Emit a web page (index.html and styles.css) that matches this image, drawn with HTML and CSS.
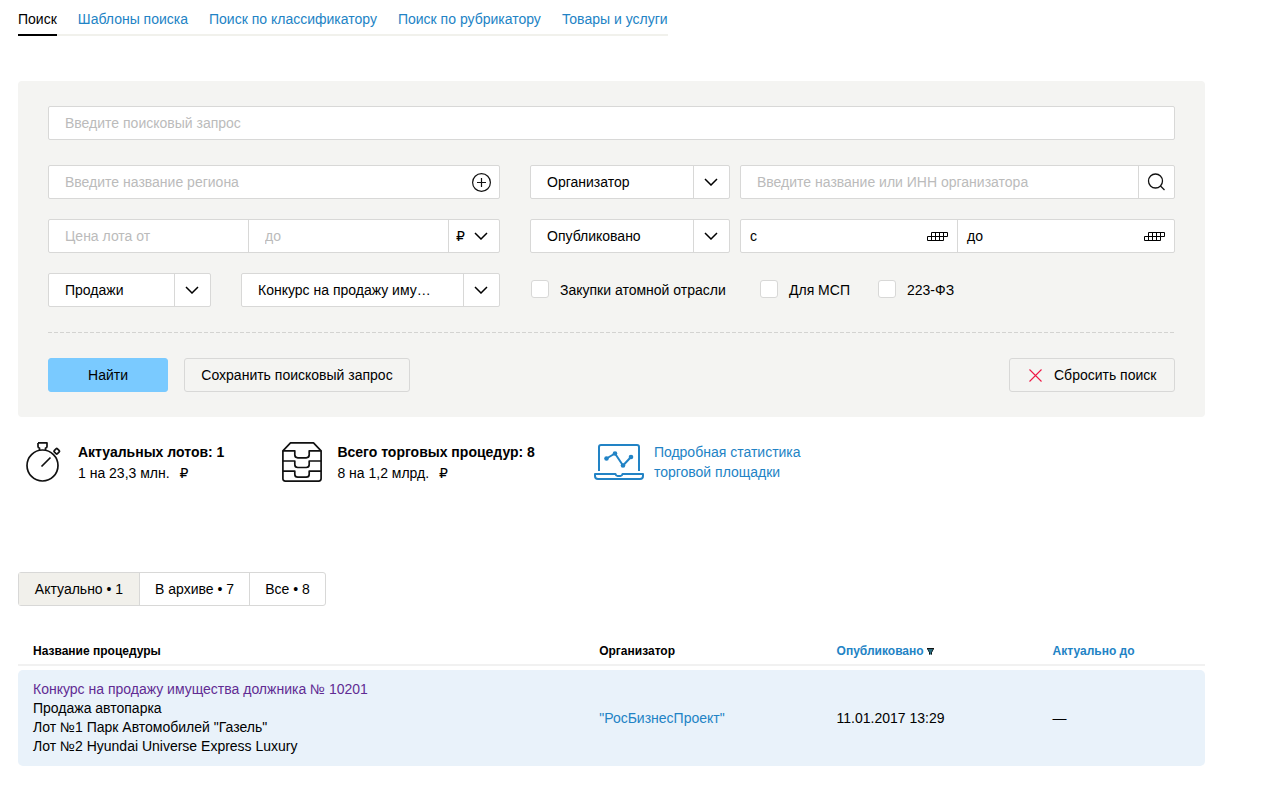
FILE: index.html
```html
<!DOCTYPE html>
<html lang="ru">
<head>
<meta charset="utf-8">
<title>Поиск</title>
<link rel="stylesheet" href="styles.css">
</head>
<body>
<nav class="nav">
  <a class="nav-link nav-link-active" href="#">Поиск</a>
  <a class="nav-link" href="#">Шаблоны поиска</a>
  <a class="nav-link" href="#">Поиск по классификатору</a>
  <a class="nav-link" href="#">Поиск по рубрикатору</a>
  <a class="nav-link" href="#">Товары и услуги</a>
</nav>

<main>
<form class="panel">
  <div class="box query"><input class="input" type="text" placeholder="Введите поисковый запрос" aria-label="Поисковый запрос"></div>

  <div class="fields">
    <div class="box">
      <input class="input" type="text" placeholder="Введите название региона" aria-label="Регион">
      <button class="icon-button add" type="button" aria-label="Добавить регион">
        <svg width="20" height="20" viewBox="0 0 20 20" fill="none" stroke="#111" stroke-width="1.2"><circle cx="10.500" cy="10.500" r="8.900"/><path d="M10.500 6v9M6 10.500h9"/></svg>
      </button>
    </div>
    <div class="pair">
      <div class="box select">
        <select class="select-field" aria-label="Роль"><option>Организатор</option></select>
        <svg class="chevron" width="14" height="8" viewBox="0 0 14 8"><path d="M1 1l6 6 6-6"/></svg>
      </div>
      <div class="box">
        <input class="input" type="text" placeholder="Введите название или ИНН организатора" aria-label="Организатор">
        <button class="icon-button search" type="button" aria-label="Найти организатора">
          <svg width="20" height="18" viewBox="0 0 20 18" fill="none" stroke="#111" stroke-width="1.3"><circle cx="8.500" cy="8" r="7"/><path d="M13.500 13l4 4"/></svg>
        </button>
      </div>
    </div>

    <div class="box">
      <input class="input" type="text" placeholder="Цена лота от" aria-label="Цена лота от">
      <input class="input divided" type="text" placeholder="до" aria-label="Цена лота до">
      <div class="currency divided">
        <select class="currency-field" aria-label="Валюта"><option>₽</option></select>
        <svg class="chevron" width="14" height="8" viewBox="0 0 14 8"><path d="M1 1l6 6 6-6"/></svg>
      </div>
    </div>
    <div class="pair">
      <div class="box select">
        <select class="select-field" aria-label="Дата"><option>Опубликовано</option></select>
        <svg class="chevron" width="14" height="8" viewBox="0 0 14 8"><path d="M1 1l6 6 6-6"/></svg>
      </div>
      <div class="box">
        <div class="date">
          <label for="from">с</label><input class="date-input" id="from" type="text">
          <svg width="21" height="9" viewBox="0 0 21 9"><path d="M4.500 0.500h16v4h-4v4h-16v-4h16M4.500 0.500v8M8.500 0.500v8M12.500 0.500v8M16.500 0.500v4"/></svg>
        </div>
        <div class="date divided">
          <label for="to">до</label><input class="date-input" id="to" type="text">
          <svg width="21" height="9" viewBox="0 0 21 9"><path d="M4.500 0.500h16v4h-4v4h-16v-4h16M4.500 0.500v8M8.500 0.500v8M12.500 0.500v8M16.500 0.500v4"/></svg>
        </div>
      </div>
    </div>

    <div class="types">
      <div class="box select">
        <select class="select-field" aria-label="Раздел"><option>Продажи</option></select>
        <svg class="chevron" width="14" height="8" viewBox="0 0 14 8"><path d="M1 1l6 6 6-6"/></svg>
      </div>
      <div class="box select">
        <select class="select-field" aria-label="Тип процедуры"><option>Конкурс на продажу иму…</option></select>
        <svg class="chevron" width="14" height="8" viewBox="0 0 14 8"><path d="M1 1l6 6 6-6"/></svg>
      </div>
    </div>
    <div class="checks">
      <label class="check"><input class="check-box" type="checkbox">Закупки атомной отрасли</label>
      <label class="check"><input class="check-box" type="checkbox">Для МСП</label>
      <label class="check"><input class="check-box" type="checkbox">223-ФЗ</label>
    </div>
  </div>

  <svg class="rule" width="100%" height="1"><line x1="0" y1="0.5" x2="100%" y2="0.5"/></svg>

  <div class="actions">
    <button class="button button-primary" type="submit">Найти</button>
    <button class="button button-save" type="button">Сохранить поисковый запрос</button>
    <button class="button button-reset" type="reset">
      <svg width="13" height="13" viewBox="0 0 13 13" stroke="#ee1946" stroke-width="1.1"><path d="M.5.5l12 12M12.500.5l-12 12"/></svg>
      Сбросить поиск
    </button>
  </div>
</form>

<section class="stats">
  <div class="stat">
    <svg width="44" height="40" viewBox="0 0 44 40" fill="none" stroke="#111" stroke-width="1.700">
      <circle cx="16.500" cy="23.500" r="15.500"/>
      <path d="M15.500 24.500l9-9"/>
      <path d="M12 .9h9v3.600q0 1.500-1.500 1.500v2M12 .9v3.600q0 1.500 1.500 1.500v2" stroke-linejoin="round"/>
      <rect x="28.500" y="7" width="4.500" height="4.500" rx="1" transform="rotate(45 30.750 9.250)"/>
    </svg>
    <div class="stat-text"><b>Актуальных лотов: 1</b><br>1 на 23,3 млн.&nbsp; <span class="ruble">₽</span></div>
  </div>
  <div class="stat">
    <svg width="40" height="40" viewBox="0 0 40 40" fill="none" stroke="#111" stroke-width="1.700" stroke-linejoin="round">
      <path d="M.9 8.800L8.500.9h23l7.600 7.900V36.600q0 2.500-2.500 2.500h-33.200Q.9 39.100.9 36.600z"/>
      <path d="M.8 8.800h12v4q0 3 3 3h8.400q3 0 3-3v-4h12M.8 19h12v3.500q0 3 3 3h8.400q3 0 3-3V19h12M.8 29.200h12v3q0 3 3 3h8.400q3 0 3-3v-3h12"/>
    </svg>
    <div class="stat-text"><b>Всего торговых процедур: 8</b><br>8 на 1,2 млрд.&nbsp; <span class="ruble">₽</span></div>
  </div>
  <a class="stat stat-link" href="#">
    <svg width="50" height="36" viewBox="0 0 50 36" fill="none" stroke="#2283c5" stroke-width="2" stroke-linejoin="round">
      <path d="M5 27V3q0-2 2-2h36q2 0 2 2v24"/>
      <path d="M1 30h20.500q.5 2 2 2h3q1.500 0 2-2H49v2q0 3-3 3H4q-3 0-3-3z"/>
      <path d="M12.500 14.500L21 9.500l8 12L37 13"/>
      <g fill="#2283c5" stroke="none"><circle cx="12.500" cy="14.500" r="2.300"/><circle cx="21" cy="9.500" r="2.300"/><circle cx="29" cy="21.500" r="2.300"/><circle cx="37" cy="13" r="2.300"/></g>
    </svg>
    <span>Подробная статистика<br>торговой площадки</span>
  </a>
</section>

<div class="tabs">
  <button class="tab tab-active" type="button">Актуально • 1</button>
  <button class="tab" type="button">В архиве • 7</button>
  <button class="tab" type="button">Все • 8</button>
</div>

<table class="results">
  <colgroup><col class="col-name"><col class="col-org"><col class="col-date"><col></colgroup>
  <thead>
    <tr><th>Название процедуры</th><th>Организатор</th>
    <th><a href="#">Опубликовано<svg class="sort" width="7" height="7" viewBox="0 0 7 7"><path fill="#111" d="M0 0h7v1H0z"/><path fill="#2a6d80" d="M1 1h5v2L5 4v2.500H2V4L1 3z"/><path fill="#111" d="M0 1h1l2 4v1.500H2V4zM7 1H6L4 5v1.500h1V4z"/></svg></a></th>
    <th><a href="#">Актуально до</a></th></tr>
  </thead>
  <tbody>
    <tr>
      <td><a class="visited" href="#">Конкурс на продажу имущества должника № 10201</a><br>Продажа автопарка<br>Лот №1 Парк Автомобилей "Газель"<br>Лот №2 Hyundai Universe Express Luxury</td>
      <td><a href="#">"РосБизнесПроект"</a></td>
      <td>11.01.2017 13:29</td>
      <td>—</td>
    </tr>
  </tbody>
</table>
</main>
</body>
</html>
```
FILE: styles.css
```css
* { box-sizing: border-box; }

body {
  margin: 0;
  padding: 9px 57px 20px 18px;
  background: #fff;
  color: #000;
  font: 14px/20px "Liberation Sans", Arial, sans-serif;
}

a { color: #2283c5; text-decoration: none; }
input, select, button { font: inherit; color: inherit; border-radius: 0; }
svg { display: block; flex: none; }

.nav { display: flex; gap: 21px; width: fit-content; box-shadow: inset 0 -2px #f1f1ec; }
.nav-link { padding-bottom: 7px; }
.nav-link-active { color: #000; box-shadow: inset 0 -2px #000; }

.panel {
  margin-top: 45px;
  padding: 25px 30px;
  border-radius: 4px;
  background: #f4f4f2;
}

.box {
  display: flex;
  height: 34px;
  min-width: 0;
  border: 1px solid #d8d8d7;
  border-radius: 2px;
  background: #fff;
}
.input {
  flex: 1;
  min-width: 0;
  padding: 0 16px;
  border: 0;
  background: transparent;
}
.input::placeholder { color: #bbb; opacity: 1; }
.divided { border-left: 1px solid #d8d8d7; }

.fields {
  display: grid;
  grid-template-columns: 452fr 645fr;
  gap: 20px 30px;
  margin-top: 25px;
}
.pair { display: grid; grid-template-columns: 200px 1fr; gap: 10px; }
.types { display: grid; grid-template-columns: 163px 1fr; gap: 30px; }

.icon-button {
  display: flex;
  align-items: center;
  justify-content: center;
  width: 36px;
  padding: 0;
  border: 0;
  background: transparent;
}
.search { border-left: 1px solid #d8d8d7; }

.select, .currency { display: grid; align-items: center; }
.select { grid-template-columns: 1fr 36px; }
.select-field, .currency-field {
  grid-area: 1 / 1 / 2 / 3;
  width: 100%;
  height: 32px;
  border: 0;
  background: transparent;
  appearance: none;
}
.select-field {
  padding: 0 36px 0 16px;
  background: linear-gradient(#d8d8d7, #d8d8d7) right 35px top / 1px 100% no-repeat;
}
.chevron {
  grid-area: 1 / 2;
  justify-self: center;
  fill: none;
  stroke: #000;
  stroke-width: 1.5;
  pointer-events: none;
}
.currency { grid-template-columns: 14px 36px; }
.currency-field { padding: 0 7px; }
.currency-field, .ruble { font-family: "DejaVu Sans", sans-serif; font-size: 14px; line-height: 16px; }
.ruble { margin-left: 2px; }

.date { display: flex; flex: 1; align-items: center; min-width: 0; padding: 0 9px; }
.date-input { flex: 1; min-width: 0; height: 32px; border: 0; background: transparent; }
.date svg { fill: none; stroke: #000; }

.checks { display: grid; grid-template-columns: 199px 88px auto; gap: 30px; align-items: center; }
.check { display: flex; gap: 11px; align-items: center; white-space: nowrap; }
.check-box {
  flex: none;
  width: 18px;
  height: 18px;
  margin: 0 0 2px 1px;
  border: 1px solid #d8d8d7;
  border-radius: 3px;
  background: #fff;
  appearance: none;
}

.rule { margin: 25px 0; stroke: #d3d3d1; stroke-dasharray: 4 2; }

.actions { display: flex; gap: 16px; }
.button {
  height: 34px;
  padding: 0 15px;
  border: 1px solid #d8d8d7;
  border-radius: 3px;
  background: transparent;
}
.button-primary { width: 120px; border-color: #7acaff; background: #7acaff; }
.button-save { min-width: 226px; }
.button-reset {
  display: flex;
  gap: 12px;
  align-items: center;
  min-width: 166px;
  margin-left: auto;
  padding: 0 14px 0 19px;
}

.stats { display: flex; gap: 50px; align-items: flex-start; margin: 25px 0 88px; padding-left: 8px; }
.stat { display: flex; gap: 15px; }
.stat:first-child { gap: 8px; margin-right: 8px; }
.stat-text { line-height: 21px; }
.stat-link { gap: 10px; align-items: center; margin-left: 9px; }

.tabs {
  display: grid;
  grid-template-columns: 120px 110px 76px;
  width: fit-content;
  border: 1px solid #d8d8d7;
  border-radius: 3px;
}
.tab { height: 32px; padding: 0; border: 0; background: transparent; }
.tab + .tab { border-left: 1px solid #d8d8d7; }
.tab-active { background: #f1f0eb; }

.results {
  width: 100%;
  margin-top: 33px;
  border-spacing: 0 4px;
  table-layout: fixed;
  line-height: 19px;
}
.col-name { width: 47.7%; }
.col-org { width: 20%; }
.col-date { width: 18.2%; }
.results th {
  padding: 0 0 4px 15px;
  border-bottom: 2px solid #f1f1f1;
  font-size: 12px;
  line-height: 17px;
  text-align: left;
}
.results td { padding: 10px 0 10px 15px; background: #e9f2fa; }
.results td:first-child { border-radius: 5px 0 0 5px; }
.results td:last-child { border-radius: 0 5px 5px 0; }
.visited { color: #612c93; }
.sort { display: inline-block; margin-left: 3px; }
```
